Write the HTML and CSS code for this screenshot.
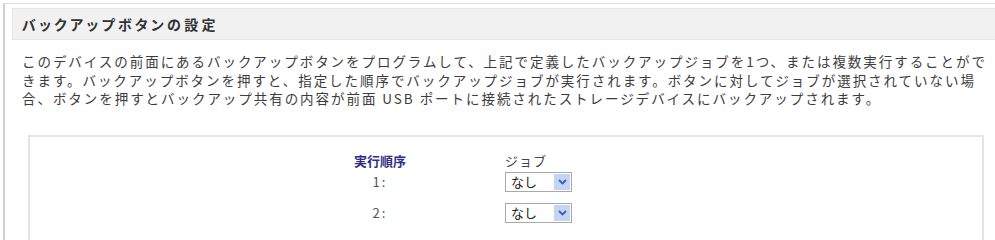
FILE: index.html
```html
<!DOCTYPE html>
<html lang="ja">
<head>
    <meta charset="UTF-8">
    <title>バックアップボタンの設定</title>
    <link rel="stylesheet" href="styles.css">
</head>
<body>
    <div class="panel">
        <div class="panel-title">バックアップボタンの設定</div>
        <p class="description">このデバイスの前面にあるバックアップボタンをプログラムして、上記で定義したバックアップジョブを1つ、または複数実行することがで<br>きます。バックアップボタンを押すと、指定した順序でバックアップジョブが実行されます。ボタンに対してジョブが選択されていない場<br>合、ボタンを押すとバックアップ共有の内容が前面 USB ポートに接続されたストレージデバイスにバックアップされます。</p>

        <div class="order-box">
            <div class="order-grid">
                <div class="col-head order-head">実行順序</div>
                <div class="col-head job-head">ジョブ</div>

                <div class="order-num">1:</div>
                <div class="select-box">
                    <span class="select-value">なし</span>
                    <span class="select-arrow">
                        <svg width="9" height="6" viewBox="0 0 9 6"><path d="M1 1 L4.5 4.5 L8 1" fill="none" stroke="#3a5fb0" stroke-width="1.8"/></svg>
                    </span>
                </div>

                <div class="order-num">2:</div>
                <div class="select-box">
                    <span class="select-value">なし</span>
                    <span class="select-arrow">
                        <svg width="9" height="6" viewBox="0 0 9 6"><path d="M1 1 L4.5 4.5 L8 1" fill="none" stroke="#3a5fb0" stroke-width="1.8"/></svg>
                    </span>
                </div>
            </div>
        </div>
    </div>
</body>
</html>
```

FILE: styles.css
```css
body {
    margin: 0;
    padding: 3px 0 0 3px;
    background-color: #fff;
    font-family: "Noto Sans CJK JP", "DejaVu Sans", sans-serif;
    color: #444;
    overflow: hidden;
}

.panel {
    border-left: 2px solid #d0d0d0;
    border-top: 1px solid #e0e0e0;
    padding: 4px 0 0 7px;
    height: 300px;
}

.panel-title {
    background-color: #f1f1f1;
    border: 1px solid #e6e6e6;
    border-right: none;
    height: 30px;
    line-height: 30px;
    padding-left: 9px;
    font-size: 14px;
    font-weight: bold;
    font-feature-settings: "palt";
    letter-spacing: 3.3px;
    color: #333;
}

.description {
    margin: 12px 0 0 10px;
    font-size: 13.5px;
    line-height: 18.5px;
    letter-spacing: 1.95px;
    white-space: nowrap;
    color: #3c3c3c;
}

.order-box {
    margin: 27px 0 0 16px;
    width: 952px;
    border: 2px solid #e4e4e4;
    height: 200px;
    padding-top: 15px;
}

.order-grid {
    display: grid;
    grid-template-columns: 100px 80px;
    column-gap: 75px;
    row-gap: 11px;
    padding-left: 300px;
    align-items: center;
}

.col-head {
    font-size: 13px;
    line-height: 18px;
    margin-bottom: -9px;
}

.order-head {
    text-align: center;
    color: #2e2e86;
    font-weight: bold;
}

.job-head {
    color: #444;
    letter-spacing: 1px;
}

.order-num {
    text-align: center;
    font-size: 13px;
    color: #555;
    letter-spacing: 2px;
}

.select-box {
    display: flex;
    align-items: stretch;
    width: 65px;
    height: 18px;
    border: 1px solid #a9a9a9;
    background-color: #fff;
    font-size: 13px;
}

.select-value {
    flex: 1;
    padding-left: 5px;
    line-height: 18px;
    color: #222;
}

.select-arrow {
    width: 16px;
    margin: 1px;
    background-color: #c4d5f4;
    display: flex;
    align-items: center;
    justify-content: center;
}
```
